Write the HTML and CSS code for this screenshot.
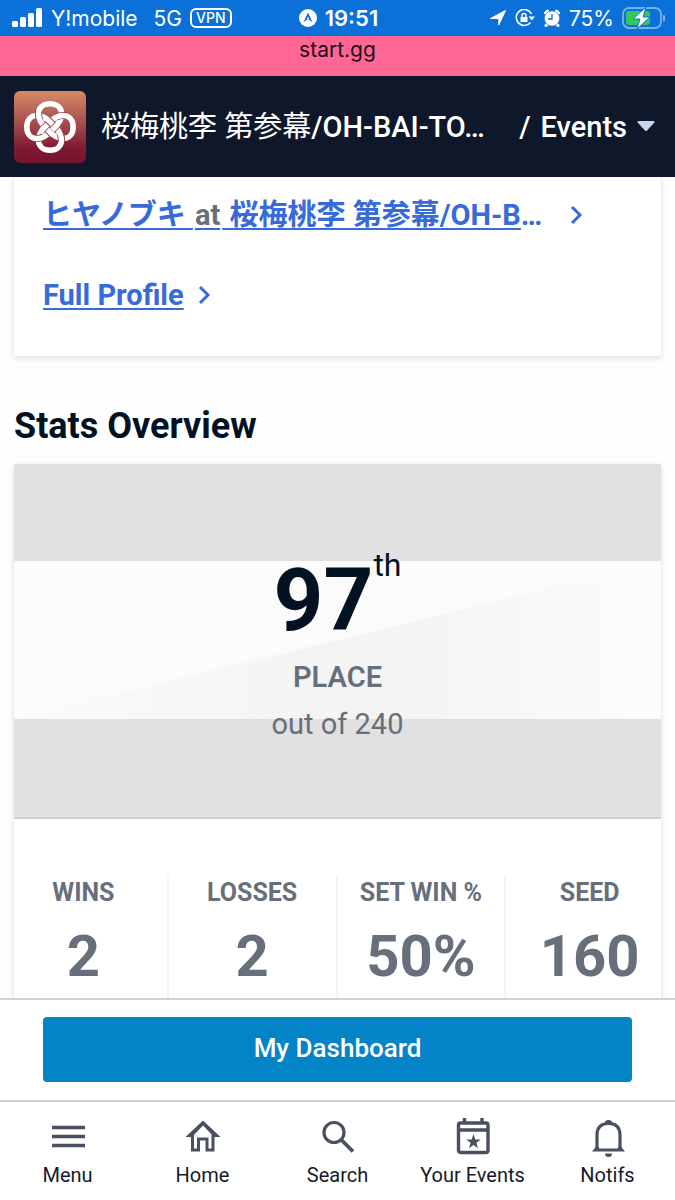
FILE: index.html
```html
<!DOCTYPE html>
<html lang="ja">
  <head>
    <meta charset="UTF-8" />
    <meta name="viewport" content="width=device-width, initial-scale=1.0" />
    <title>start.gg</title>
    <link rel="stylesheet" href="styles.css">
  </head>
  <body>
    <div class="status">
      <div class="status-left">
        <svg width="31" height="20" viewBox="0 0 31 20" fill="#fff">
          <rect x="0" y="13" width="6" height="6" rx="1.5" />
          <rect x="8" y="9" width="6" height="10" rx="1.5" />
          <rect x="16" y="5" width="6" height="14" rx="1.5" />
          <rect x="24" y="0" width="6" height="19" rx="1.5" />
        </svg>
        <span>Y!mobile</span>
        <span class="network">5G</span>
        <span class="vpn">VPN</span>
      </div>
      <div class="status-time">
        <svg width="18" height="18" viewBox="0 0 18 18">
          <circle cx="9" cy="9" r="9" fill="#fff" />
          <path d="M9 3.5L13.5 13 9 10.2 4.5 13z" fill="#0b70d8" />
          <path d="M9 7.5L10.5 11 9 10 7.5 11z" fill="#fff" />
        </svg>
        <span>19:51</span>
      </div>
      <div class="status-right">
        <svg width="18" height="18" viewBox="0 0 18 18">
          <path fill="#fff" stroke="#fff" stroke-linejoin="round" d="M16.5 1.5L9.8 16V9.500H1.500z" />
        </svg>
        <svg width="20" height="18" viewBox="0 0 20 18" fill="none" stroke="#fff">
          <path stroke-width="1.6" d="M16.5 5A8 8 0 1 0 15.5 13.5" />
          <path fill="#fff" stroke="none" d="M13.5 7.5h6.500L16.8 11.500zM5.500 8h7v5h-7z" />
          <path stroke-width="1.4" d="M7 8.5V6.500a2 2 0 0 1 4 0v2" />
        </svg>
        <svg width="18" height="18" viewBox="0 0 18 18">
          <path stroke="#fff" stroke-width="3" stroke-linecap="round" d="M2.5 4l2-2M15.5 4l-2-2M4 15.5l-1 1M14 15.5l1 1" />
          <circle cx="9" cy="9.5" r="7.6" fill="#fff" stroke="#0b70d8" stroke-width=".5" />
          <path fill="none" stroke="#0b70d8" stroke-width="1.3" d="M9 5v5H5" />
        </svg>
        <span>75%</span>
        <svg width="43" height="24" viewBox="0 0 43 24">
          <rect x="1" y="2" width="38" height="20" rx="6" fill="none" stroke="#78b0eb" stroke-width="1.8" />
          <path fill="#78b0eb" d="M41 9a3 3 0 0 1 0 6z" />
          <rect x="4" y="5" width="24" height="14" rx="3" fill="#34c759" />
          <path fill="#fff" stroke="#0b70d8" stroke-width="1" d="M24 1L11 13h7l-3 10 13-12h-7z" />
        </svg>
      </div>
    </div>
    <div class="site">start.gg</div>

    <header class="topbar">
      <svg class="logo" width="72" height="72" viewBox="0 0 72 72">
        <title>桜梅桃李</title>
        <defs>
          <linearGradient id="sunset" x2="0" y2="1">
            <stop offset="0" stop-color="#d58c68" />
            <stop offset=".5" stop-color="#a04549" />
            <stop offset=".8" stop-color="#7f1932" />
            <stop offset="1" stop-color="#77152e" />
          </linearGradient>
          <!-- one quarter of the knot: top loop to right loop -->
          <path id="strand" fill="none" stroke="#fff" stroke-width="5.6" d="M36 12.800C29 12.800 24.500 17 24.500 23C24.500 28 27 32.100 30.900 36L36 41.100C39.900 45 44 47.500 49 47.500C55 47.500 59.200 43 59.200 36" />
          <!-- the two places where a strand passes over another -->
          <g id="over" fill="none">
            <path stroke="#943d46" stroke-width="7.200" d="M24.900 20Q24.500 21.500 24.500 23C24.500 25.500 25.100 27.800 26.200 29.900M33.500 38.600L38.500 43.600" />
            <path stroke="#fff" stroke-width="5.400" d="M24.900 19.500Q24.500 21.500 24.500 23C24.500 25.500 25.100 27.800 26.400 30.300M33 38.100L39 44.100" />
          </g>
        </defs>
        <rect width="72" height="72" rx="6" fill="url(#sunset)" />
        <use href="#strand" />
        <use href="#strand" transform="rotate(90 36 36)" />
        <use href="#strand" transform="rotate(180 36 36)" />
        <use href="#strand" transform="rotate(270 36 36)" />
        <use href="#over" />
        <use href="#over" transform="rotate(90 36 36)" />
        <use href="#over" transform="rotate(180 36 36)" />
        <use href="#over" transform="rotate(270 36 36)" />
      </svg>
      <span class="tournament"><span class="kanji">桜梅桃李 第参幕</span>/OH-BAI-TO…</span>
      <button class="crumb" type="button">
        <span>/</span>
        <span>Events</span>
        <svg width="18" height="11" viewBox="0 0 18 11">
          <path fill="#c9d5e8" d="M1.5 0h15c1 0 1.3 1 .7 1.7L10 9.5c-.6.7-1.4.7-2 0L.8 1.7C.2 1 .5 0 1.5 0z" />
        </svg>
      </button>
    </header>

    <main>
      <section class="card profile">
        <div class="profile-row">
          <span class="profile-name"><a href="#">ヒヤノブキ <span class="at">at</span> 桜梅桃李 第参幕/OH-B</a><span class="more">…</span></span>
          <svg class="chevron" width="14" height="20" viewBox="0 0 14 20">
            <path d="M2 2l8 8-8 8" />
          </svg>
        </div>
        <div class="profile-row full">
          <a href="#">Full Profile</a>
          <svg class="chevron" width="14" height="20" viewBox="0 0 14 20">
            <path d="M2 2l8 8-8 8" />
          </svg>
        </div>
      </section>

      <h1>Stats Overview</h1>

      <section class="card">
        <div class="hero">
          <svg class="shade" viewBox="0 0 647 158" preserveAspectRatio="none">
            <defs>
              <linearGradient id="shade">
                <stop offset="0" stop-color="#fbfbfb" />
                <stop offset=".45" stop-color="#f4f4f4" />
                <stop offset=".6" stop-color="#f4f4f4" />
                <stop offset="1" stop-color="#fcfcfc" />
              </linearGradient>
            </defs>
            <path fill="#fbfbfb" d="M0 0h647v158H0z" />
            <path fill="url(#shade)" d="M0 158L647 0v158z" />
          </svg>
          <div class="placing">97<sup>th</sup></div>
          <div class="place">PLACE</div>
          <div class="total">out of 240</div>
        </div>
        <dl class="stats">
          <div>
            <dt>WINS</dt>
            <dd>2</dd>
          </div>
          <div>
            <dt>LOSSES</dt>
            <dd>2</dd>
          </div>
          <div>
            <dt>SET WIN %</dt>
            <dd>50%</dd>
          </div>
          <div>
            <dt>SEED</dt>
            <dd>160</dd>
          </div>
        </dl>
      </section>
    </main>

    <div class="dashboard">
      <button type="button">My Dashboard</button>
    </div>

    <nav>
      <a href="#">
        <svg width="40" height="40" viewBox="0 0 40 40">
          <path stroke="#4a5060" stroke-width="3.4" d="M4 10.5h33M4 19.5h33M4 28.5h33" />
        </svg>
        Menu
      </a>
      <a href="#">
        <svg width="40" height="40" viewBox="0 0 40 40" fill="none" stroke="#4a5060" stroke-width="3">
          <path d="M9.5 16v17h6V22h8.500v11h6V16" />
          <path fill="#4a5060" stroke="none" d="M20 3.500L37.500 20h-6.500L20 8.500 9 20H2.500z" />
        </svg>
        Home
      </a>
      <a href="#">
        <svg width="40" height="40" viewBox="0 0 40 40" fill="none" stroke="#4a5060">
          <circle cx="16" cy="15.5" r="10" stroke-width="3.2" />
          <path stroke-width="3.8" d="M23 22.5l12 12" />
        </svg>
        Search
      </a>
      <a href="#">
        <svg width="40" height="40" viewBox="0 0 40 40" fill="none" stroke="#4a5060" stroke-width="3.4">
          <rect x="5.5" y="6" width="29.5" height="29.5" rx="2" />
          <path d="M11.500 1v5M29 1v5M5 13h30" />
          <path fill="#4a5060" stroke="none" d="M20.5 17l1.8 5.500h5.500l-4.400 3.300 1.600 5.500-4.500-3.300-4.500 3.300 1.600-5.500-4.400-3.300h5.500z" />
        </svg>
        Your Events
      </a>
      <a href="#">
        <svg width="40" height="40" viewBox="0 0 40 40" fill="none" stroke="#4a5060" stroke-width="3.2">
          <path d="M9 31V18C9 10 13.500 6.500 20.500 6.500S32 10 32 18v13" />
          <path fill="#4a5060" stroke="none" d="M4 34.500l4-5h2.500l.8 2h18.400l.8-2H33l4 5zM16.500 7a4 4 0 0 1 8 0zM17 36.500h7a3.500 3.500 0 0 1-7 0z" />
        </svg>
        Notifs
      </a>
    </nav>
  </body>
</html>
```
FILE: styles.css
```css
* {
  box-sizing: border-box;
}

body {
  display: flex;
  flex-direction: column;
  height: 100vh;
  margin: 0;
  overflow: hidden;
  font-family: Roboto, "Noto Sans CJK JP", sans-serif;
  color: #67707a;
  background: #fefefe;
}

a {
  color: #376bda;
}

button {
  border: 0;
  font: inherit;
  font-weight: 500;
  color: #fff;
}

/* phone status bar */
.status {
  display: grid;
  grid-template-columns: 1fr auto 1fr;
  align-items: center;
  height: 36px;
  padding: 0 10px 0 12px;
  font-family: Inter, sans-serif;
  font-size: 21px;
  color: #fff;
  background: #0b70d8;
}

.status-left,
.status-time,
.status-right {
  display: flex;
  align-items: center;
  gap: 8px;
}

.status-time {
  font-size: 22px;
  font-weight: 600;
}

.status-right {
  justify-content: flex-end;
}

.network {
  margin-left: 8px;
}

.vpn {
  padding: 0 4px;
  border: 2px solid;
  border-radius: 6px;
  font-size: 14px;
  font-weight: 500;
  line-height: 16px;
}

.site {
  height: 40px;
  font-family: Inter, sans-serif;
  font-size: 21px;
  line-height: 28px;
  text-align: center;
  color: #201018;
  background: #ff6694;
}

.topbar {
  display: flex;
  align-items: center;
  height: 101px;
  padding: 0 20px 0 14px;
  font-size: 29px;
  font-weight: 500;
  line-height: 40px;
  color: #fff;
  background: #0f172a;
}

.logo {
  flex: none;
  margin-right: 15px;
}

.tournament {
  flex: 1;
  overflow: hidden;
  white-space: nowrap;
}

.kanji {
  font-weight: 400;
}

.crumb {
  display: flex;
  align-items: center;
  gap: 10px;
  padding: 0;
  background: none;
}

/* scrolling content, cut off by the bars below */
main {
  flex: 1;
  min-height: 0;
  padding: 0 14px;
  overflow: hidden;
}

.card {
  background: #fff;
  box-shadow: 0 2px 6px rgba(0, 0, 0, 0.14);
}

.profile {
  display: flex;
  flex-direction: column;
  gap: 40px;
  padding: 18px 29px 41px;
  font-size: 29px;
  font-weight: 700;
  line-height: 40px;
}

.profile-row {
  display: flex;
  align-items: center;
  gap: 28px;
  white-space: nowrap;
}

.profile-row a {
  text-decoration-thickness: 2px;
  text-underline-offset: 3px;
  text-decoration-skip-ink: none;
}

.full {
  gap: 14px;
}

.at {
  padding: 0 2px;
  color: #67707a;
}

.more {
  color: #376bda;
}

.chevron {
  fill: none;
  stroke: #376bda;
  stroke-width: 3;
}

h1 {
  margin: 50px 0 18px;
  font-size: 36px;
  font-weight: 700;
  line-height: 40px;
  color: #031222;
}

.hero {
  position: relative;
  padding: 96px 0 69px;
  border-bottom: 2px solid #d0d1d6;
  text-align: center;
  background: #e1e1e1;
}

.hero > div {
  position: relative;
}

.shade {
  position: absolute;
  top: 97px;
  left: 0;
  width: 100%;
  height: 158px;
}

.placing {
  margin-bottom: 14px;
  font-size: 87px;
  font-weight: 700;
  line-height: 80px;
  color: #031222;
}

.placing sup {
  font-size: 32px;
  font-weight: 400;
  line-height: 0;
  vertical-align: 54px;
}

.place,
.total {
  font-size: 29px;
  line-height: 47px;
}

.place {
  font-weight: 600;
}

.stats {
  display: grid;
  grid-template-columns: repeat(4, 1fr);
  margin: 0 -14px;
  padding-top: 57px;
  text-align: center;
  font-weight: 700;
}

.stats div {
  height: 140px;
  border-right: 2px solid #f4f4f5;
}

.stats dt {
  font-size: 25px;
  line-height: 34px;
}

.stats dd {
  margin: 12px 0 0;
  font-size: 58px;
  line-height: 68px;
}

.stats div:last-child {
  border-color: transparent;
}

.dashboard {
  padding: 17px 43px 18px;
  border-top: 2px solid #d0d1dc;
  background: #fff;
}

.dashboard button {
  width: 100%;
  height: 65px;
  padding-bottom: 4px;
  border-radius: 4px;
  font-size: 26px;
  background: #0284c7;
}

nav {
  display: grid;
  grid-template-columns: repeat(5, 1fr);
  height: 100px;
  padding-top: 15px;
  border-top: 2px solid #cfcfd2;
  background: #fff;
}

nav a {
  display: flex;
  flex-direction: column;
  align-items: center;
  gap: 4px;
  font-size: 20px;
  line-height: 28px;
  text-decoration: none;
  color: #151b28;
}
```
